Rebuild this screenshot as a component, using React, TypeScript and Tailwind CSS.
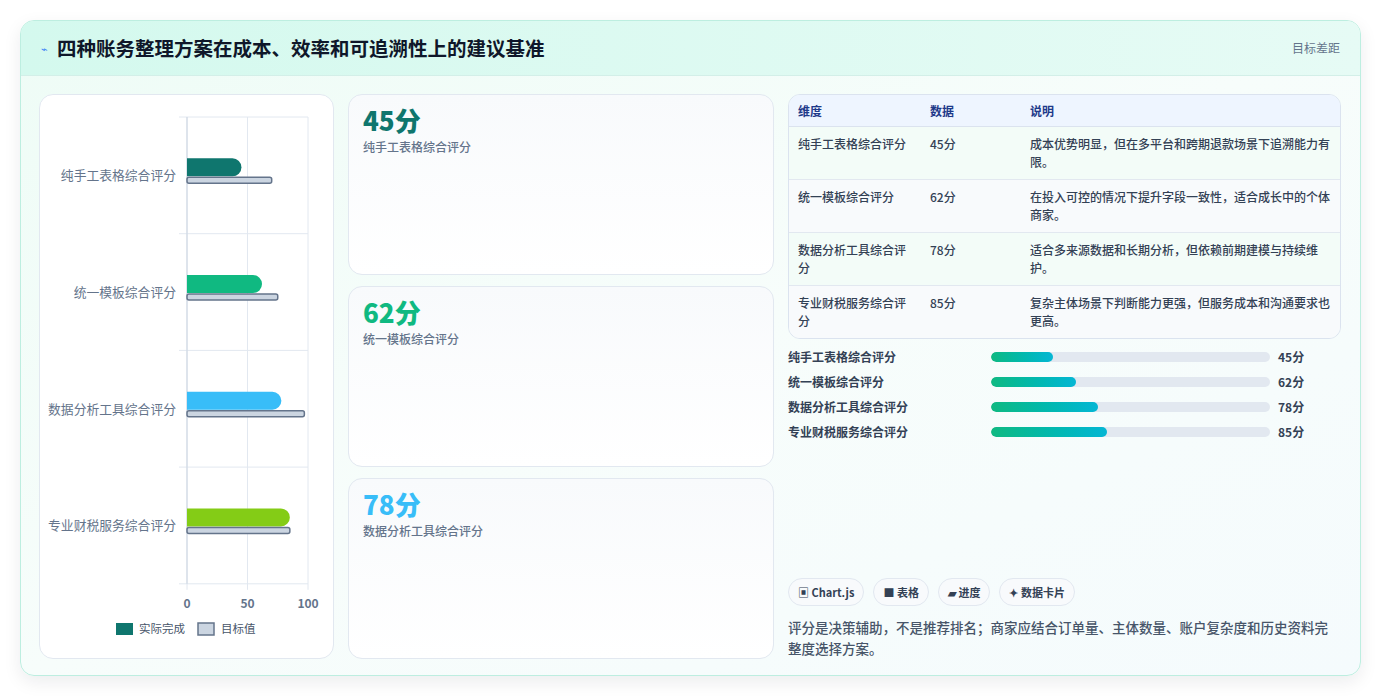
import React from "react";

const font = { fontFamily: '"Noto Sans CJK SC", "Noto Sans", sans-serif' };
const rows = [
  { name: "纯手工表格综合评分", v: 45, t: 70, c: "#0f766e", d: "成本优势明显，但在多平台和跨期退款场景下追溯能力有限。" },
  { name: "统一模板综合评分", v: 62, t: 75, c: "#10b981", d: "在投入可控的情况下提升字段一致性，适合成长中的个体商家。" },
  { name: "数据分析工具综合评分", v: 78, t: 97, c: "#38bdf8", d: "适合多来源数据和长期分析，但依赖前期建模与持续维护。" },
  { name: "专业财税服务综合评分", v: 85, t: 85, c: "#84cc16", d: "复杂主体场景下判断能力更强，但服务成本和沟通要求也更高。" },
];

function Chart() {
  const x0 = 147, w = 121, top = 22, band = 116.7;
  return (
    <svg width="294" height="563" className="block">
      {[0, 1, 2].map((i) => (
        <line key={i} x1={x0 + (w / 2) * i} x2={x0 + (w / 2) * i} y1={top} y2={top + band * 4 + 6} stroke="#e2e8f0" />
      ))}
      {[0, 1, 2, 3, 4].map((i) => (
        <line key={i} x1={x0 - 8} x2={x0 + w} y1={top + band * i} y2={top + band * i} stroke="#e2e8f0" />
      ))}
      <line x1={x0} x2={x0} y1={top} y2={top + band * 4} stroke="#cbd5e1" />
      {rows.map((r, i) => {
        const cy = top + band * i + band / 2;
        return (
          <g key={i}>
            <text x={x0 - 11} y={cy + 5} textAnchor="end" fontSize="12.8" fill="#64748b" style={font}>{r.name}</text>
            <path d={`M${x0} ${cy - 17} H${x0 + (w * r.v) / 100 - 9} a9 9 0 0 1 9 9 v0 a9 9 0 0 1 -9 9 H${x0} Z`} fill={r.c} />
            <rect x={x0} y={cy + 2} width={(w * r.t) / 100} height={6} rx={2} fill="#cbd5e1" stroke="#64748b" strokeWidth="1.5" />
          </g>
        );
      })}
      {["0", "50", "100"].map((s, i) => (
        <text key={s} x={x0 + (w / 2) * i} y={top + band * 4 + 24} textAnchor="middle" fontSize="12" fontWeight="600" fill="#64748b" style={font}>{s}</text>
      ))}
      <rect x="76" y="528" width="17" height="12" fill="#0f766e" />
      <text x="99" y="538" fontSize="11.5" fill="#475569" style={font}>实际完成</text>
      <rect x="158" y="528" width="16" height="12" fill="#cbd5e1" stroke="#64748b" strokeWidth="1.5" />
      <text x="181" y="538" fontSize="11.5" fill="#475569" style={font}>目标值</text>
    </svg>
  );
}

export default function App() {
  return (
    <div className="w-[1381px] h-[697px] bg-white pt-[20px] px-[20px]" style={font}>
      <div className="h-[656px] rounded-[14px] border border-[#bdeee0] bg-gradient-to-br from-[#eefcf6] via-[#f7fdfb] to-[#f5fbfd] shadow-[0_6px_18px_rgba(15,23,42,0.08)] overflow-hidden flex flex-col">
        <div className="h-[55px] shrink-0 flex items-center justify-between px-[20px] bg-gradient-to-r from-[#d4f9ee] to-[#e6fbf5] border-b border-[#d3efe8]">
          <div className="flex items-center gap-[9px]">
            <span className="text-[#3b82f6] text-[11px]">⌁</span>
            <span className="text-[19.5px] font-bold text-[#0f172a]">四种账务整理方案在成本、效率和可追溯性上的建议基准</span>
          </div>
          <span className="text-[12px] text-[#64748b]">目标差距</span>
        </div>
        <div className="flex-1 flex gap-[14px] p-[18px] pr-[19px]">
          <div className="w-[295px] shrink-0 rounded-[14px] border border-[#e2e8f0] bg-white overflow-hidden">
            <Chart />
          </div>
          <div className="w-[426px] shrink-0 flex flex-col gap-[11px]">
            {rows.slice(0, 3).map((r) => (
              <div key={r.name} className="flex-1 rounded-[14px] border border-[#e2e8f0] bg-gradient-to-b from-[#f8fafc] to-white px-[14px] pt-[8px]">
                <div className="text-[26px] font-extrabold leading-[34px]" style={{ color: r.c }}>{r.v}分</div>
                <div className="text-[12px] text-[#64748b] font-medium mt-[1px]">{r.name}</div>
              </div>
            ))}
          </div>
          <div className="flex-1 flex flex-col">
            <div className="rounded-[12px] border border-[#dbe3ef] overflow-hidden text-[12px] text-[#334155] font-medium">
              <div className="flex h-[32px] items-center bg-[#eef5ff] border-b border-[#dbe3ef] text-[#1e3a8a] font-semibold">
                <div className="w-[132px] pl-[9px]">维度</div>
                <div className="w-[100px] pl-[9px]">数据</div>
                <div className="flex-1 pl-[9px]">说明</div>
              </div>
              {rows.map((r, i) => (
                <div key={r.name} className={`flex py-[8px] leading-[18px] ${i % 2 === 0 ? "bg-[#f3fcf8]" : "bg-[#f8fafc]"} ${i < 3 ? "border-b border-[#e2e8f0]" : ""}`}>
                  <div className="w-[132px] px-[9px]">{r.name}</div>
                  <div className="w-[100px] px-[9px]">{r.v}分</div>
                  <div className="flex-1 px-[9px]">{r.d}</div>
                </div>
              ))}
            </div>
            <div className="mt-[11px] flex flex-col gap-[11px]">
              {rows.map((r) => (
                <div key={r.name} className="flex items-center h-[14px] text-[12px] font-semibold text-[#334155]">
                  <div className="w-[203px]">{r.name}</div>
                  <div className="w-[279px] h-[10px] rounded-full bg-[#e2e8f0] overflow-hidden">
                    <div className="h-full rounded-full bg-gradient-to-r from-[#10b981] to-[#06b6d4]" style={{ width: `${r.v * 0.49}%` }} />
                  </div>
                  <div className="ml-[8px]">{r.v}分</div>
                </div>
              ))}
            </div>
            <div className="flex-1" />
            <div className="flex gap-[9px] text-[11px] font-semibold text-[#334155]">
              {["▣ Chart.js", "■ 表格", "▰ 进度", "✦ 数据卡片"].map((t) => (
                <span key={t} className="px-[9px] h-[28px] flex items-center rounded-full border border-[#e2e8f0] bg-[#f8fafc]">{t}</span>
              ))}
            </div>
            <p className="mt-[11px] text-[13.5px] leading-[21px] text-[#475569] font-medium">评分是决策辅助，不是推荐排名；商家应结合订单量、主体数量、账户复杂度和历史资料完整度选择方案。</p>
          </div>
        </div>
      </div>
    </div>
  );
}
